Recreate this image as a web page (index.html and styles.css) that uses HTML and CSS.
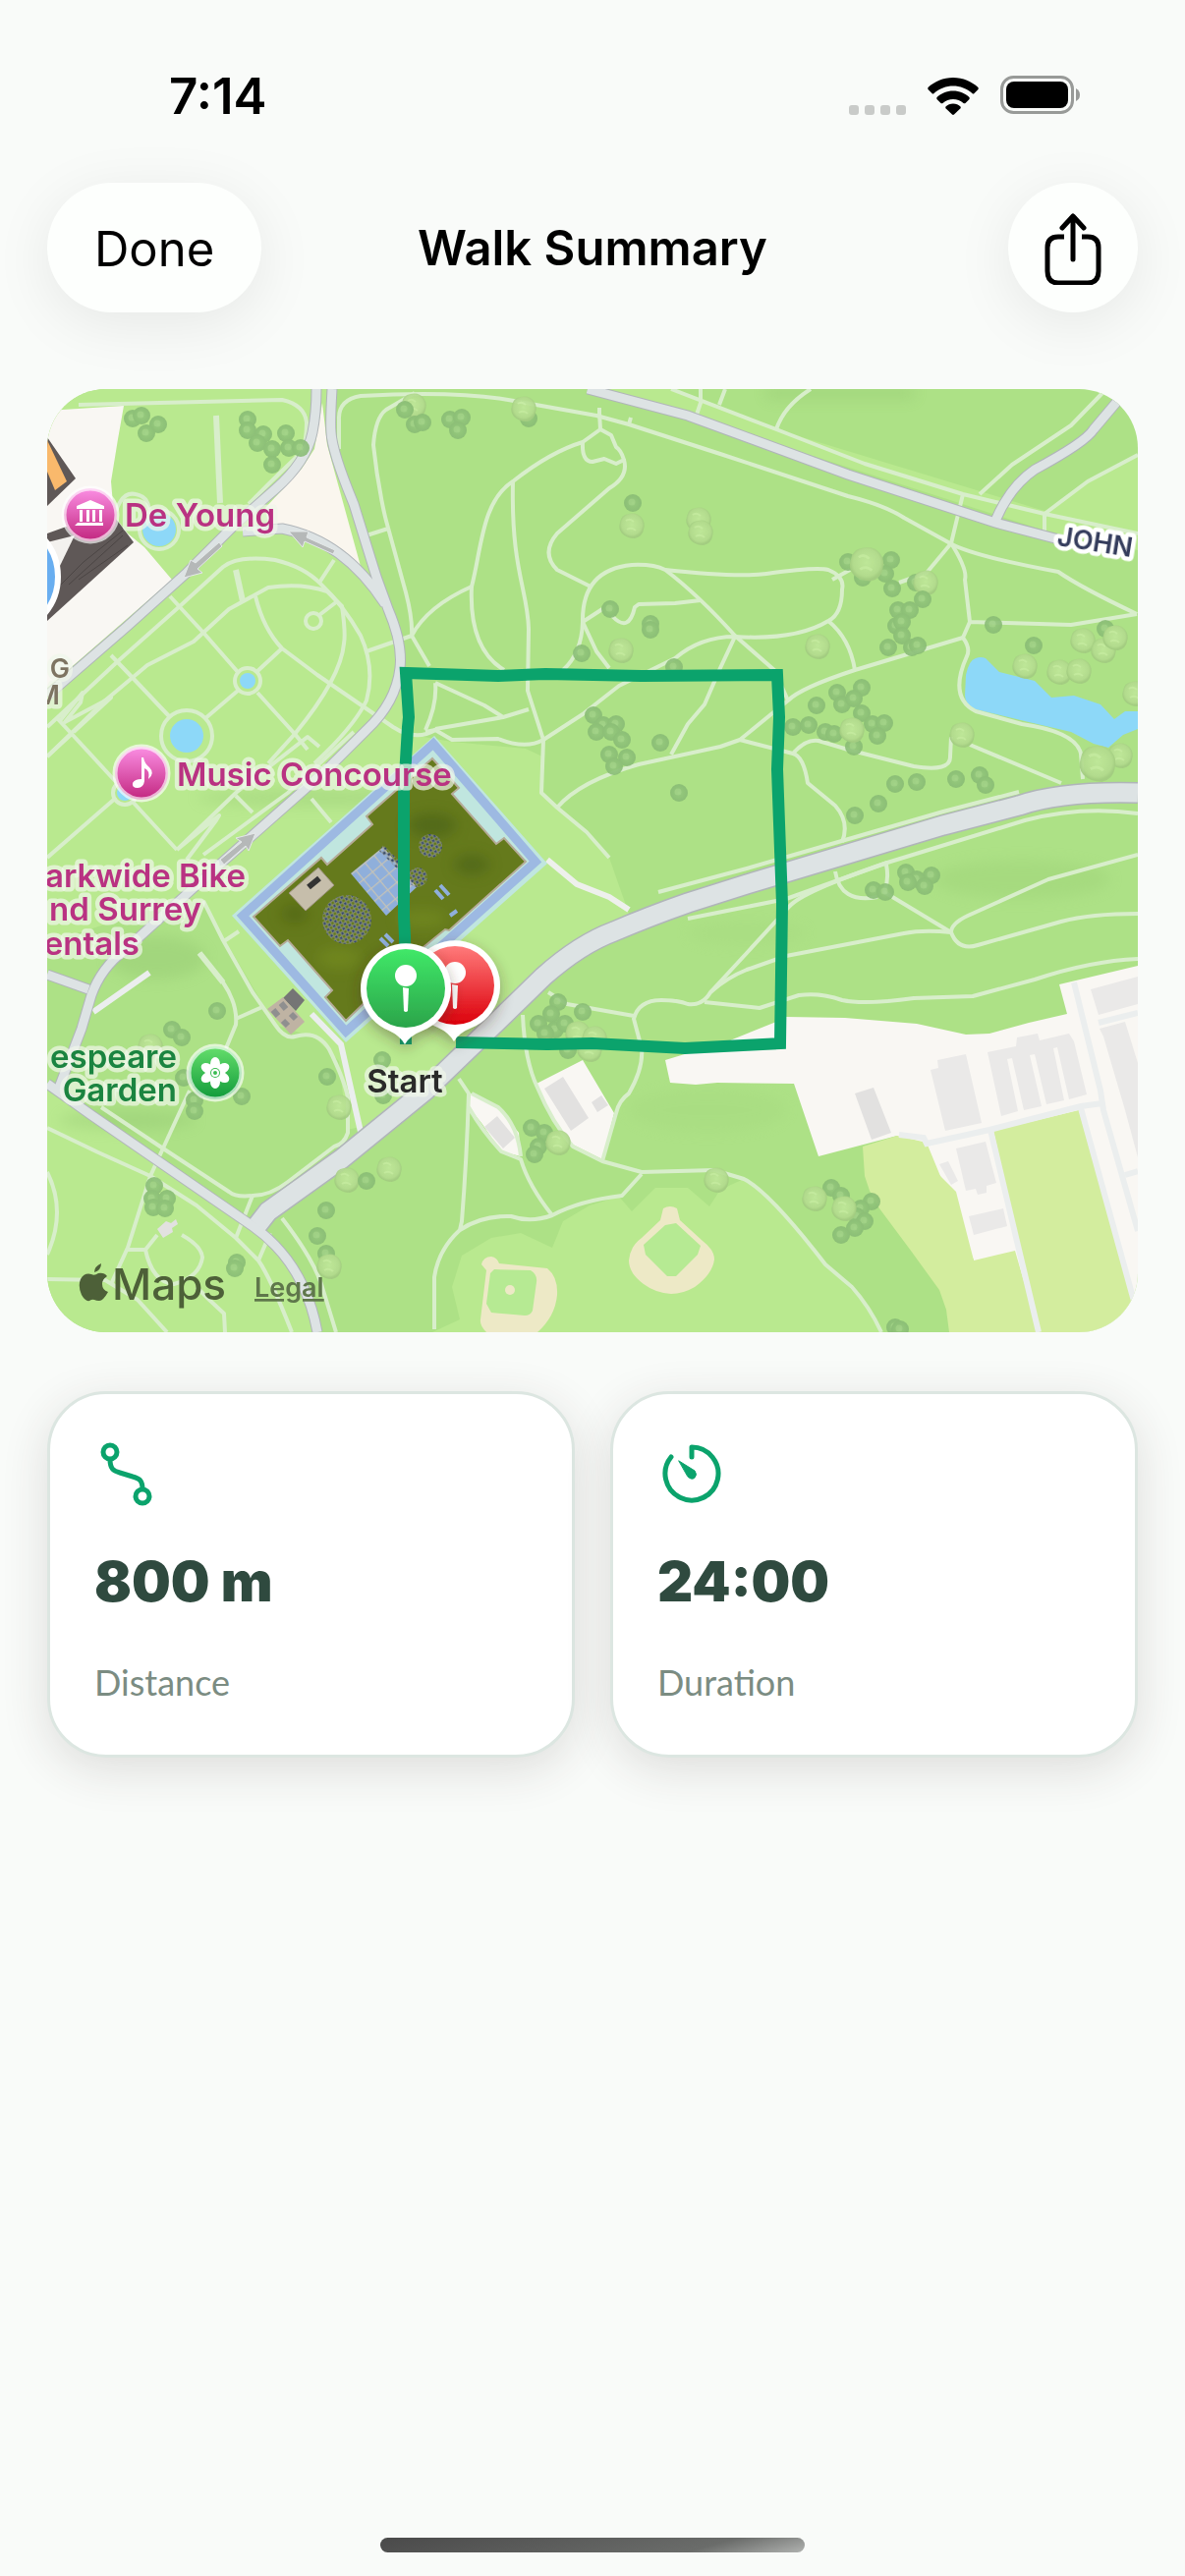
FILE: index.html
```
<!DOCTYPE html>
<html lang="en">
<head>
  <meta charset="UTF-8" />
  <meta name="viewport" content="width=device-width, initial-scale=1.0"/>
  <title>Walk Summary</title>
  <link rel="stylesheet" href="styles.css">
</head>
<body>
  <div class="statusbar">
    <div class="time">7:14</div>
    <div class="status-icons">
      <svg width="58" height="10" viewBox="0 0 58 10" fill="#c9cbc9"><rect width="10" height="10" rx="3"/><rect x="16" width="10" height="10" rx="3"/><rect x="32" width="10" height="10" rx="3"/><rect x="48" width="10" height="10" rx="3"/></svg>
      <svg width="52" height="38" viewBox="0 0 52 38"><path d="M26 0C36 0 45 4 51.500 10Q52 11 51.500 12L47.500 16Q46.500 17 45.500 16C40 11 33 8.500 26 8.500S12 11 6.500 16Q5.500 17 4.500 16L.5 12Q0 11 .5 10C7 4 16 0 26 0Z"/><path d="M26 13.500C32.500 13.500 38 16 42.500 20Q43 21 42.500 22L38.500 26Q37.500 26.500 36.500 26C33.500 23.300 30 22 26 22S18.500 23.300 15.500 26Q14.500 26.500 13.500 26L9.500 22Q9 21 9.500 20C14 16 19.500 13.500 26 13.500Z"/><path d="M26 26.500C29 26.500 31.500 27.500 33.500 29.500Q34 30.500 33.500 31.300L27 37.500Q26 38.400 25 37.500L18.500 31.300Q18 30.500 18.500 29.500C20.500 27.500 23 26.500 26 26.500Z"/></svg>
      <svg width="82" height="40" viewBox="0 0 82 40"><rect x="1.500" y="1.500" width="72" height="36" rx="12" fill="none" stroke="#989a98" stroke-width="3"/><rect x="6" y="6" width="63" height="27" rx="8"/><path d="M77 13Q81 15 81 19.500T77 26Z" fill="#989a98"/></svg>
    </div>
  </div>

  <header class="navbar">
    <button class="pill" type="button">Done</button>
    <h1>Walk Summary</h1>
    <button class="pill round" type="button" aria-label="Share">
      <svg width="60" height="76" viewBox="0 0 60 76" fill="none" stroke="#000" stroke-width="5" stroke-linecap="round" stroke-linejoin="round"><path d="M30 50V7M19 18L30 6L41 18"/><path d="M21 27H15Q4 27 4 38V62Q4 74 15 74H45Q56 74 56 62V38Q56 27 45 27H39" stroke-linecap="butt"/></svg>
    </button>
  </header>

  <main class="container">
    <div class="map">
      <svg viewBox="48 396 1110 960" role="img" aria-label="Map of the walk">
        <defs>
          <linearGradient id="pink" x2="0" y2="1"><stop offset="0" stop-color="#fb8fe4"/><stop offset="1" stop-color="#c2267f"/></linearGradient>
          <linearGradient id="leaf" x2="0" y2="1"><stop offset="0" stop-color="#66df6c"/><stop offset="1" stop-color="#109a3a"/></linearGradient>
          <linearGradient id="go" x2="0" y2="1"><stop offset="0" stop-color="#40e868"/><stop offset="1" stop-color="#2ba44a"/></linearGradient>
          <linearGradient id="stop" x2="0" y2="1"><stop offset="0" stop-color="#ff7a7a"/><stop offset="1" stop-color="#dc000b"/></linearGradient>
          <radialGradient id="dark-tree"><stop offset="0" stop-color="#9ccf83"/><stop offset=".3" stop-color="#90c47a"/><stop offset="1" stop-color="#88bb74"/></radialGradient>
          <radialGradient id="light-tree" cx=".5" cy=".45"><stop offset="0" stop-color="#c0e89a"/><stop offset=".8" stop-color="#b3db8e"/><stop offset="1" stop-color="#a2cb80"/></radialGradient>
          <pattern id="glass" width="12" height="12" patternUnits="userSpaceOnUse" patternTransform="translate(390 862) rotate(50)"><rect width="12" height="12" fill="#8fafdb"/><path d="M0 0H12M0 0V12" stroke="#c4c2b8" stroke-width="2.500"/></pattern>
          <pattern id="dots" width="5" height="5" patternUnits="userSpaceOnUse" patternTransform="rotate(15)"><circle cx="2.500" cy="2.500" r="1.800" fill="#2d4268" stroke="#9a9d92" stroke-width="1"/></pattern>
          <filter id="blur"><feGaussianBlur stdDeviation="7"/></filter>
          <filter id="shade" x="-50%" y="-50%" width="200%" height="200%"><feDropShadow dx="0" dy="5" stdDeviation="7" flood-color="#432" flood-opacity=".4"/></filter>
          <g id="t"><circle r="9" fill="url(#dark-tree)"/><circle cx="-1" cy="-1" r="3.500" fill="#a6d58c" opacity=".6"/></g>
          <g id="l"><path d="M-12 -3Q-11 -11 -3 -12Q5 -14 10 -8Q14 -3 12 4Q11 11 3 13Q-5 13 -10 8Q-14 3 -12 -3Z" fill="url(#light-tree)"/><path d="M-6 -5Q-2 -8 2 -4M-5 4Q0 1 4 5" stroke="#cdf0a8" stroke-width="2" fill="none" opacity=".6"/></g>
        </defs>

        <!-- ground -->
        <rect x="48" y="396" width="1110" height="960" fill="#ade186"/>
        <g fill="#b9e98f">
          <path d="M48 396H336V440L400 620L408 680L420 748L460 755L535 762L552 770L552 806L620 873L640 930L513 1020L400 1140L353 1150L345 1080L320 1056L280 1043L207 920L180 917L48 960Z"/>
          <path d="M48 1110L150 1178L255 1248L305 1300L320 1356H48Z"/>
          <path d="M598 396L700 423L1063 540L1158 560V540L1063 520L790 437L683 396Z"/>
          <path d="M667 1209H700L722 1228L733 1211L757 1200L783 1220L840 1287L887 1333L897 1356H440L468 1343L460 1310L470 1278L500 1260L530 1255L562 1270L573 1243L600 1227L630 1218L643 1233Z"/>
          <path d="M1063 523L1107 490L1158 463V543Z"/>
        </g>
        <g filter="url(#blur)" opacity=".25">
          <ellipse cx="1040" cy="895" rx="90" ry="20" fill="#92c76c"/><ellipse cx="720" cy="1130" rx="80" ry="22" fill="#a0d479"/><ellipse cx="160" cy="975" rx="50" ry="22" fill="#82b763"/><ellipse cx="130" cy="1140" rx="70" ry="10" fill="#82b763"/><ellipse cx="760" cy="950" rx="60" ry="12" fill="#a0d479"/><rect x="780" y="394" width="150" height="12" fill="#82b763"/><ellipse cx="330" cy="812" rx="130" ry="9" fill="#82b763"/>
        </g>

        <!-- plots and water -->
        <path d="M48 418L126 413L120 447L113 490L116 525L130 543L147 557L175 590L60 690L48 700Z" fill="#f9f7f3"/>
        <path d="M328 410L333 453L368 580L340 560L307 543L273 533L270 517L307 477L320 457Z" fill="#faf6ee"/>
        <path d="M677 1079L743 1059L790 1040L800 1035L860 1036L933 1042L983 1053L1007 1052L1047 1041L1086 1032L1078 1002L1158 983V1356H1057L991 1283L957 1197L913 1156L833 1177L808 1103L730 1102L708 1104L682 1102Z" fill="#f9f7f3"/>
        <path d="M878 1167L913 1156L943 1163L957 1197L973 1213L991 1283L1033 1273L1057 1356H966L963 1333L956 1313L927 1273L895 1230L885 1212L880 1197ZM1011 1151L1098 1130L1158 1345V1356H1057Z" fill="#d3ed9e"/>
        <path d="M544 1104L593 1079L625 1133L613 1180L583 1165L565 1143ZM477 1127L479 1113L507 1127L528 1153L530 1177L510 1172L490 1143Z" fill="#f9f7f3"/>
        <path d="M993 670Q998 668 1003 670L1017 684L1053 693L1070 710L1093 708L1120 717L1134 732L1145 724H1158V742L1143 748L1128 761L1113 757L1090 745L1047 735L993 722Q982 717 982 708L983 687Q986 672 993 670Z" fill="#8dd8f8"/>
        <g fill="#8dd8f8"><circle cx="190" cy="749" r="17"/><circle cx="252" cy="693" r="8"/><circle cx="162" cy="539" r="17"/><circle cx="127" cy="807" r="8"/></g>

        <!-- ball fields -->
        <g fill="#ede9c6">
          <path d="M675 1230Q682 1226 689 1230L692 1242L715 1263Q727 1272 727 1282Q725 1297 707 1310Q695 1317 683 1317Q667 1316 655 1307Q640 1296 640 1283Q641 1269 653 1260L672 1242Z"/>
          <path d="M490 1287Q492 1279 500 1279Q506 1280 508 1286L557 1291Q568 1300 567 1318Q565 1340 547 1356H495Q488 1349 489 1343L495 1293Z"/>
        </g>
        <g fill="#b6ea93"><path d="M677 1247L688 1245L713 1268L710 1277L688 1299H679L657 1277L655 1267Z"/><path d="M503 1292L540 1293Q547 1297 546 1305L542 1334Q540 1339 534 1339L500 1336L495 1327L499 1296Z"/></g>
        <circle cx="519" cy="1313" r="5" fill="#ede9c6"/>

        <!-- buildings -->
        <g fill="#eae9e8">
          <path d="M1110 1007L1158 994V1022L1118 1033ZM1119 1047L1145 1040L1158 1082V1178L1145 1130L1123 1055Z"/>
          <path d="M1005 1071L1034 1065L1035 1056L1056 1052L1058 1059L1088 1052L1093 1060L1106 1114L1088 1119L1076 1066L1072 1067L1083 1120L1065 1124L1053 1073L1048 1074L1060 1126L1042 1130L1030 1077L1025 1078L1036 1131L1019 1136Z"/>
          <path d="M947 1089L955 1087L954 1079L983 1073L999 1143L962 1151ZM973 1169L1003 1162L1014 1204L1004 1207V1214L995 1216L993 1210L983 1212ZM956 1185L965 1182L975 1202L968 1206ZM986 1238L1021 1230L1025 1248L991 1257Z"/>
        </g>
        <g fill="#e2e1e0"><path d="M870 1113L889 1107L907 1153L887 1160ZM554 1108L573 1096L599 1138L581 1151ZM602 1122L612 1115L619 1125L608 1132ZM493 1147L506 1136L524 1158L512 1169ZM160 1251L169 1243L174 1245L179 1241L181 1246L175 1250L176 1254L166 1260Z"/></g>
        <g fill="none" stroke="#ebeeee" stroke-width="6">
          <path d="M915 1155L940 1158L943 1164L1007 1150L1100 1126L1122 1123M1093 1000L1120 1110L1123 1130L1158 1253M1008 1150L1057 1356M1100 1128L1155 1328M1118 1041L1158 1031M1145 1196L1158 1192"/>
          <path d="M317 1032L347 1063L367 1152M95 1030L152 990"/>
        </g>

        <!-- footpaths -->
        <g class="paths">
          <path d="M80 412L287 407Q310 412 312 430Q312 450 307 460L273 493L253 513"/>
          <path d="M220 423L224 512M240 580L247 612M203 970L227 1000" stroke-width="6"/>
          <path d="M345 457V427Q344 407 367 403C400 401 470 398 523 408L607 423L640 432L733 462L863 505Q900 514 920 527L967 553Q990 566 1077 582Q1100 598 1157 625"/>
          <path d="M422 400L393 417Q382 425 380 453C385 500 393 530 393 530L413 603Q420 630 419 647L437 678M373 545L395 538M373 663L419 647Q435 617 480 597"/>
          <path d="M48 740L120 673L183 617L227 577Q243 565 280 570Q310 577 327 595Q350 617 367 647Q382 680 373 713Q360 740 320 777"/>
          <path d="M48 770L107 713L150 677L197 653L233 620L273 598Q307 593 333 602L348 617Q352 645 350 655Q347 690 300 747L273 777"/>
          <path d="M260 607Q268 640 287 660L323 687L400 740Q423 755 443 743M173 607L208 645L242 684M262 705L300 747L313 763M287 660L260 685M242 703L208 732M113 667L137 692L173 730M57 730L73 747L120 798M134 815L180 865M48 770L73 747M325 593L340 570M325 626L342 613"/>
          <circle cx="252" cy="693" r="13"/><circle cx="190" cy="749" r="26"/><circle cx="319" cy="632" r="8"/><circle cx="127" cy="807" r="12"/><circle cx="162" cy="539" r="20"/><path d="M118 520Q125 500 138 503Q150 505 152 518"/>
          <path d="M48 873L118 812M180 865L240 807L313 750L325 760M207 870L293 807L360 745M190 875L220 835L223 830L180 865M317 813L337 837M240 810L257 827M60 735L84 705L82 715L66 735L113 710L75 745"/>
          <path d="M207 917L227 957L257 1010L280 1043Q290 1058 300 1055Q323 1048 335 1068Q350 1098 354 1117V1153Q350 1165 340 1167L293 1203Q275 1217 257 1217Q240 1219 233 1213L163 1167L103 1127M228 958L243 948"/>
          <path d="M203 970L227 1000Q242 1022 240 1043L230 1067M240 1037L267 1025M193 1110L153 1197L130 1270L113 1307M48 1148L100 1173L153 1197L200 1227L240 1260L263 1283Q275 1300 297 1356"/>
          <path d="M48 1302L107 1303L140 1323L170 1356M130 1272H148L160 1257M148 1272Q155 1305 177 1307Q203 1300 206 1280Q205 1268 185 1257M200 1310L213 1323L228 1337L229 1356M48 1193Q68 1233 48 1277M257 1217L240 1260M275 1255L263 1283M287 1240Q318 1280 327 1307L342 1356"/>
          <path d="M467 1098L477 1113Q475 1180 470 1243L468 1252M442 1353V1300Q446 1272 468 1252Q490 1237 520 1238Q540 1245 562 1237Q590 1222 633 1217L653 1195M477 1127Q490 1150 510 1172L530 1180Q538 1207 562 1237M480 1113L507 1127Q527 1145 530 1177"/>
          <path d="M532 1033Q534 1080 547 1107Q562 1143 583 1167L613 1182L653 1193L727 1191L757 1200Q783 1213 840 1287L867 1310Q885 1330 897 1356M613 1182L627 1133Q630 1120 640 1113Q655 1087 653 1067Q645 1037 645 1037Q650 1018 673 1018Q690 1018 700 1022Q715 1024 723 1010L760 970L803 923Q815 908 903 878M558 1010L577 1022L645 1034"/>
          <path d="M717 1020L773 1026L813 1013Q835 1010 857 1018Q880 1023 930 1016L990 1014L1053 997Q1110 978 1158 976M723 1010Q740 995 760 987L800 973L920 950Q940 946 968 949Q968 940 985 932L1067 895L1158 870M968 949Q975 968 995 962L1080 938Q1110 930 1158 930"/>
          <path d="M700 935L760 923L800 915L903 878L1043 835Q1100 820 1158 828M850 887Q855 920 893 913M902 880Q905 895 900 908L968 949M670 908L760 884L860 855L960 826L1037 806"/>
          <path d="M610 420L611 437L593 450Q560 460 522 490C490 510 490 560 480 597Q477 660 513 682M522 490C520 580 537 600 538 640L537 703L553 753L551 807L567 822L597 847L620 873M567 822Q590 795 650 778L733 760L753 753L802 713Q815 700 870 682L980 649"/>
          <path d="M593 450Q592 470 603 470L615 467L627 472L635 468Q632 458 627 455L622 443L611 437M635 468Q640 485 620 497L567 543Q550 563 567 580L603 598M573 682Q592 665 593 633Q592 580 643 575Q665 574 677 580Q710 605 748 647L788 682L802 713"/>
          <path d="M677 580Q750 588 780 584Q830 577 843 580Q860 587 857 600Q857 625 843 632Q810 652 748 648Q713 648 687 670L630 698L593 727L553 753Q535 763 507 752L460 753L443 743L433 745M593 633L607 663L620 680M593 633L613 620M623 627Q640 645 646 618L650 615L687 614L713 611M748 648L733 680L717 717L700 737L683 768"/>
          <path d="M443 695L493 718L512 730L443 742M512 730L538 722M443 695Q445 717 433 743M753 753L807 767Q818 770 822 797L850 820Q865 837 857 857M807 767Q820 752 833 754L863 763L930 780Q968 786 967 770L968 750M987 758L1080 797"/>
          <path d="M683 396L790 437L880 472L980 503L1063 523L1158 543M790 437Q798 413 825 396M713 396V410L708 425M732 412L738 396M980 503L968 553L943 583L915 593M968 553Q985 580 982 590L987 633L980 649Q988 660 984 668Q965 710 993 724L1040 737Q1095 745 1100 767L1102 793M997 503L1030 473L1090 433L1122 400M1063 523V540M1063 523L1107 490L1158 463M987 633L1090 636L1157 625M843 632Q865 650 870 682M847 590L865 580M610 415V424M642 425L640 432"/>
          <path d="M557 875L587 900L620 913L640 926" stroke-width="6" stroke="#eef0ec"/>
        </g>

        <!-- roads, casing first -->
        <g class="roads casing">
          <path class="wide" d="M262 1247L273 1233L347 1180L433 1110L513 1033L553 994Q590 961 625 948Q660 933 700 919L760 900L960 840L1037 820Q1080 805 1158 807"/>
          <path d="M322 396Q322 420 318 440Q312 470 280 498L240 533L190 583L130 637L48 708"/>
          <path d="M338 396Q336 430 337 440Q338 460 360 513L383 587L395 620Q410 655 407 680Q403 715 373 743L333 783L220 883L127 967Q103 985 93 1013L83 1047L60 1107M247 541L287 538Q350 550 392 615M48 992L90 1007"/>
          <path d="M48 1103L93 1135L257 1248Q310 1285 323 1356M598 396L700 423L863 483L1013 532L1085 551M1140 405L1113 437Q1105 450 1053 478Q1028 495 1013 530"/>
        </g>
        <g class="roads">
          <path class="wide" d="M262 1247L273 1233L347 1180L433 1110L513 1033L553 994Q590 961 625 948Q660 933 700 919L760 900L960 840L1037 820Q1080 805 1158 807"/>
          <path d="M322 396Q322 420 318 440Q312 470 280 498L240 533L190 583L130 637L48 708"/>
          <path d="M338 396Q336 430 337 440Q338 460 360 513L383 587L395 620Q410 655 407 680Q403 715 373 743L333 783L220 883L127 967Q103 985 93 1013L83 1047L60 1107M247 541L287 538Q350 550 392 615M48 992L90 1007"/>
          <path d="M48 1103L93 1135L257 1248Q310 1285 323 1356M598 396L700 423L863 483L1013 532L1085 551M1140 405L1113 437Q1105 450 1053 478Q1028 495 1013 530"/>
        </g>
        <g fill="#b5b8b8" stroke="#e4e8e8" stroke-width="1"><path d="M341 560L312 547L314 541L294 541L308 557L310 551L339 564Z"/><path d="M223 552L199 573L194 570L187 588L206 583L201 579L226 556Z"/><path d="M224 875L246 857L240 853L260 848L253 866L250 861L228 880Z"/></g>

        <!-- museum roof -->
        <path d="M48 445L77 487L48 515ZM48 543L112 520L136 552L48 632Z" fill="#5f5857"/>
        <path d="M48 448L68 490L56 499L48 480Z" fill="#f9b96c"/>
        <path d="M48 552L76 545L60 578L48 572Z" fill="#f3f1ee"/>
        <path d="M70 595L125 545M62 595L85 572L125 540M80 590L130 555" stroke="#4b4544" stroke-width="1" fill="none"/>
        <circle cx="1" cy="587" r="58" fill="#69aef0" stroke="#fff" stroke-width="6"/>

        <!-- academy of sciences -->
        <path d="M442 749L557 879L352 1061L236 932Z" fill="#c0e6df"/>
        <path d="M441 757L545 877L352 1050L247 932Z" fill="none" stroke="#9db9e2" stroke-width="9"/>
        <path d="M440 772L467 802L460 808L505 859L513 853L535 877L457 947L453 946L420 973L352 1039L331 1015L338 1008L293 957L285 963L258 933L327 873L333 880L379 839L373 831Z" fill="#657a1c" stroke="#b5ab98" stroke-width="2"/>
        <g filter="url(#blur)" opacity=".5"><ellipse cx="440" cy="840" rx="25" ry="12" fill="#3f5a12"/><ellipse cx="480" cy="880" rx="18" ry="10" fill="#3f5a12"/><ellipse cx="345" cy="975" rx="22" ry="10" fill="#7c9420"/><ellipse cx="300" cy="930" rx="14" ry="10" fill="#465c10"/><ellipse cx="430" cy="935" rx="25" ry="8" fill="#7c9420"/></g>
        <path d="M390 862L424 903L393 932L357 889Z" fill="url(#glass)"/>
        <circle cx="353" cy="936" r="25" fill="url(#dots)"/><circle cx="438" cy="861" r="12" fill="url(#dots)"/><circle cx="425" cy="893" r="10" fill="url(#dots)"/><path d="M390 860L412 882L408 888L386 866Z" fill="url(#dots)"/>
        <path d="M324 883L340 901L311 927L294 909Z" fill="#c6beab" stroke="#9d947f" stroke-width="1"/><path d="M314 903L325 894" stroke="#333" stroke-width="6"/>
        <path d="M443 906L451 915M448 901L457 911M387 955L395 963M392 951L400 959M458 932L465 927" stroke="#8fafdb" stroke-width="4"/>
        <path d="M298 1006L310 1018L301 1029L288 1016Z" fill="#757575"/>
        <path d="M288 1015L310 1040L296 1053L272 1027Z" fill="#bfb3a3"/><path d="M278 1028L283 1034M286 1021L291 1027M288 1039L293 1044M296 1032L301 1037" stroke="#8f8f8f" stroke-width="6"/>

        <!-- trees -->
        <g opacity=".9">
          <use href="#t" x="135" y="426"/><use href="#t" x="144" y="423"/><use href="#t" x="161" y="432"/><use href="#t" x="149" y="441"/><use href="#t" x="252" y="427"/><use href="#t" x="252" y="438"/><use href="#t" x="268" y="442"/><use href="#t" x="262" y="451"/><use href="#t" x="291" y="441"/><use href="#t" x="294" y="456"/><use href="#t" x="306" y="456"/><use href="#t" x="277" y="457"/><use href="#t" x="277" y="473"/>
          <use href="#l" x="421" y="413"/><use href="#t" x="412" y="417"/><use href="#t" x="422" y="432"/><use href="#t" x="430" y="430"/><use href="#t" x="458" y="427"/><use href="#t" x="470" y="425"/><use href="#t" x="466" y="438"/><use href="#t" x="538" y="426"/><use href="#l" x="533" y="416"/>
          <use href="#t" x="644" y="512"/><use href="#l" x="643" y="535"/><use href="#l" x="711" y="529"/><use href="#l" x="713" y="542"/><use href="#t" x="621" y="620"/><use href="#t" x="662" y="635"/><use href="#t" x="662" y="641"/><use href="#l" x="632" y="662"/><use href="#t" x="592" y="665"/><use href="#t" x="686" y="679"/>
          <use href="#t" x="604" y="728"/><use href="#t" x="614" y="738"/><use href="#t" x="627" y="737"/><use href="#t" x="607" y="745"/><use href="#t" x="622" y="745"/><use href="#t" x="633" y="753"/><use href="#t" x="672" y="756"/><use href="#t" x="620" y="768"/><use href="#t" x="638" y="771"/><use href="#t" x="625" y="780"/><use href="#t" x="691" y="807"/>
          <use href="#t" x="863" y="572"/><use href="#t" x="907" y="570"/><use href="#t" x="901" y="584"/><use href="#t" x="878" y="588"/><use href="#t" x="908" y="599"/><use href="#l" transform="translate(882 574) scale(1.350)"/><use href="#t" x="932" y="593"/><use href="#l" x="942" y="593"/><use href="#t" x="939" y="610"/><use href="#t" x="914" y="621"/><use href="#t" x="926" y="621"/><use href="#t" x="912" y="637"/><use href="#t" x="918" y="633"/><use href="#t" x="918" y="647"/><use href="#t" x="904" y="659"/><use href="#t" x="928" y="659"/><use href="#t" x="934" y="657"/><use href="#l" x="832" y="658"/>
          <use href="#t" x="1011" y="636"/><use href="#t" x="1052" y="657"/><use href="#l" x="1043" y="678"/><use href="#l" x="1078" y="684"/><use href="#l" x="1098" y="683"/><use href="#l" x="1102" y="652"/><use href="#t" x="1125" y="640"/><use href="#l" x="1123" y="662"/><use href="#l" x="1135" y="649"/><use href="#l" x="1155" y="706"/>
          <use href="#t" x="852" y="705"/><use href="#t" x="877" y="700"/><use href="#t" x="857" y="717"/><use href="#t" x="869" y="711"/><use href="#t" x="831" y="718"/><use href="#t" x="877" y="726"/><use href="#t" x="807" y="740"/><use href="#t" x="823" y="738"/><use href="#t" x="840" y="745"/><use href="#t" x="849" y="747"/><use href="#t" x="888" y="737"/><use href="#t" x="900" y="736"/><use href="#t" x="893" y="749"/><use href="#t" x="869" y="760"/><use href="#l" x="867" y="743"/><use href="#l" x="979" y="748"/>
          <use href="#l" x="1140" y="769"/><use href="#l" transform="translate(1117 777) scale(1.450)"/>
          <use href="#t" x="911" y="798"/><use href="#t" x="933" y="796"/><use href="#t" x="973" y="793"/><use href="#t" x="997" y="789"/><use href="#t" x="1003" y="799"/><use href="#t" x="894" y="818"/><use href="#t" x="870" y="830"/><use href="#t" x="922" y="888"/><use href="#t" x="948" y="891"/><use href="#t" x="933" y="895"/><use href="#t" x="924" y="898"/><use href="#t" x="941" y="902"/><use href="#t" x="889" y="906"/><use href="#t" x="901" y="908"/>
          <use href="#t" x="221" y="1029"/><use href="#l" x="153" y="1065"/><use href="#t" x="175" y="1048"/><use href="#t" x="185" y="1056"/><use href="#t" x="187" y="1097"/><use href="#t" x="246" y="1116"/><use href="#t" x="198" y="1120"/><use href="#t" x="198" y="1131"/><use href="#t" x="333" y="1096"/><use href="#t" x="389" y="1079"/><use href="#t" x="390" y="1115"/><use href="#l" x="345" y="1127"/>
          <use href="#t" x="157" y="1207"/><use href="#t" x="155" y="1220"/><use href="#t" x="170" y="1220"/><use href="#t" x="156" y="1229"/><use href="#t" x="168" y="1230"/><use href="#t" x="241" y="1285"/><use href="#t" x="239" y="1291"/><use href="#l" x="353" y="1201"/><use href="#t" x="373" y="1202"/><use href="#l" x="396" y="1190"/><use href="#t" x="332" y="1232"/><use href="#t" x="323" y="1258"/><use href="#t" x="332" y="1276"/><use href="#l" x="335" y="1289"/>
          <use href="#t" x="568" y="1020"/><use href="#t" x="561" y="1032"/><use href="#t" x="593" y="1030"/><use href="#t" x="548" y="1042"/><use href="#t" x="565" y="1048"/><use href="#t" x="575" y="1042"/><use href="#t" x="555" y="1052"/><use href="#t" x="578" y="1069"/><use href="#l" x="588" y="1052"/><use href="#l" x="605" y="1057"/><use href="#l" x="600" y="1068"/><use href="#t" x="541" y="1148"/><use href="#t" x="554" y="1153"/><use href="#t" x="548" y="1167"/><use href="#t" x="544" y="1175"/><use href="#l" x="568" y="1163"/><use href="#l" x="729" y="1201"/>
          <use href="#t" x="846" y="1209"/><use href="#t" x="856" y="1217"/><use href="#t" x="887" y="1223"/><use href="#t" x="876" y="1230"/><use href="#t" x="872" y="1238"/><use href="#t" x="880" y="1243"/><use href="#t" x="870" y="1250"/><use href="#t" x="856" y="1257"/><use href="#l" x="829" y="1220"/><use href="#l" x="859" y="1230"/><use href="#t" x="911" y="1351"/><use href="#t" x="916" y="1353"/>
        </g>

        <!-- walked route -->
        <path d="M413 1063L412 953L411 933V807L415 740L416 730L413 685L507 688L555 686L653 688L791 687L793 730L791 783L796 920L794 1062L697 1067L603 1062L557 1063L464 1061" fill="none" stroke="#0ba36c" stroke-width="12"/>

        <!-- place markers -->
        <g stroke="#fff" stroke-opacity=".65" stroke-width="5"><circle cx="92" cy="524" r="27" fill="url(#pink)"/><circle cx="144" cy="787" r="27" fill="url(#pink)"/><circle cx="219" cy="1092" r="27" fill="url(#leaf)"/></g>
        <path d="M92 509L106 515V518H78V515ZM79 532H105V535H76ZM81 519H84V531H81ZM88 519H91V531H88ZM94 519H97V531H94ZM101 519H104V531H101Z" fill="#fff"/>
        <path d="M144 771H146Q147 777 152 781Q158 787 151 793Q153 784 147 782V795Q146 802 140 802Q134 802 135 797Q137 793 144 793Z" fill="#fff"/>
        <g fill="#fff" transform="translate(219 1092)"><g id="petals"><ellipse cy="-9" rx="5" ry="7"/><ellipse cy="9" rx="5" ry="7"/></g><use href="#petals" transform="rotate(60)"/><use href="#petals" transform="rotate(120)"/><circle r="5" fill="#3bbb52"/><circle r="3" fill="none" stroke="#fff" stroke-width="2"/></g>

        <!-- start and end pins -->
        <g filter="url(#shade)"><path d="M462 1060Q457 1051 446 1046A46 46 0 1 1 480 1046Q467 1051 462 1060Z" fill="#fff"/><circle cx="463" cy="1003" r="40" fill="url(#stop)"/><circle cx="463" cy="990" r="11" fill="#fff"/><path d="M460 1002L466 1003L465 1026Q463 1028 461 1026Z" fill="#fff"/></g>
        <g filter="url(#shade)"><path d="M412 1063Q407 1054 396 1049A46 46 0 1 1 430 1049Q417 1054 412 1063Z" fill="#fff"/><circle cx="413" cy="1006" r="40" fill="url(#go)"/><circle cx="413" cy="993" r="11" fill="#fff"/><path d="M410 1005L416 1006L415 1029Q413 1031 411 1029Z" fill="#fff"/></g>

        <!-- labels -->
        <g class="labels">
          <g class="pink"><text x="127" y="536">De Young</text><text x="180" y="800">Music Concourse</text>
            <g text-anchor="end"><text x="250" y="903">arkwide Bike</text><text x="205" y="937">nd Surrey</text><text x="142" y="972">entals</text></g></g>
          <g class="green" text-anchor="end"><text x="180" y="1087">espeare</text><text x="180" y="1121">Garden</text></g>
          <g class="gray" text-anchor="end"><text x="71" y="690">G</text><text x="61" y="717">M</text></g>
          <text class="street" transform="translate(1075 555) rotate(9)">JOHN</text>
          <text class="start" x="412" y="1112" text-anchor="middle">Start</text>
        </g>
        <g class="brand">
          <path d="M96 1295Q96 1289 103 1286Q103 1293 96 1295ZM109 1299Q104 1302 104 1307Q104 1313 110 1315Q105 1324 101 1324Q98 1324 96 1323Q94 1322 91 1324Q87 1325 83 1318Q79 1309 82 1302Q86 1295 93 1297Q96 1299 100 1296Q106 1295 109 1299Z"/>
          <text x="114" y="1323">Maps</text>
        </g>
        <a href="#legal"><text class="legal" x="259" y="1320">Legal</text></a>
      </svg>
    </div>

    <section class="cards">
      <div class="card">
        <svg width="72" height="68" viewBox="0 0 72 68" fill="none" stroke="#0ba36c" stroke-width="5"><circle cx="16" cy="12" r="7"/><circle cx="49" cy="57" r="7"/><path d="M16 19C16 29 19 31 26 33L39 37C47 39 49 42 49 50"/></svg>
        <div class="value">800 m</div>
        <div class="label">Distance</div>
      </div>
      <div class="card">
        <svg width="72" height="68" viewBox="0 0 72 68" fill="none" stroke="#0ba36c" stroke-width="5" stroke-linecap="round" stroke-linejoin="round"><path d="M35 17V7A27 27 0 1 1 14 17"/><path d="M22 21L38 31Q41 35 38 38T31 37Z" fill="#0ba36c" stroke-width="1"/></svg>
        <div class="value">24:00</div>
        <div class="label">Duration</div>
      </div>
    </section>
  </main>

  <div class="home-indicator"></div>
</body>
</html>
```
FILE: styles.css
```
* {
  box-sizing: border-box;
}
body {
  font-family: Inter, "Liberation Sans", sans-serif;
  margin: 0;
  min-height: 100vh;
  display: flex;
  flex-direction: column;
  background-color: #f9fbf9;
  color: #000;
}
.statusbar {
  display: flex;
  justify-content: space-between;
  padding: 68px 106px 0 172px;
  height: 186px;
}
.time {
  font-size: 51px;
  font-weight: 600;
  line-height: 60px;
}
.status-icons {
  display: flex;
  align-items: flex-end;
  gap: 22px;
  height: 49px;
}
.navbar {
  display: grid;
  grid-template-columns: 1fr auto 1fr;
  align-items: center;
  padding: 0 48px;
}
.navbar h1 {
  margin: 0;
  padding-top: 2px;
  font-size: 49px;
  font-weight: 600;
  line-height: 60px;
}
.pill {
  justify-self: start;
  height: 132px;
  padding: 2px 48px 0;
  border: none;
  border-radius: 66px;
  background: #fdfffd;
  box-shadow: 0 12px 60px rgba(0,0,0,0.08);
  font-family: inherit;
  font-size: 49px;
  color: #000;
  cursor: pointer;
}
.round {
  justify-self: end;
  width: 132px;
  padding: 0;
  display: flex;
  align-items: center;
  justify-content: center;
}
.container {
  display: flex;
  flex-direction: column;
  gap: 60px;
  padding: 78px 48px 0;
}
.map {
  border-radius: 60px;
  overflow: hidden;
}
.map svg {
  display: block;
  width: 100%;
}
.paths {
  fill: none;
  stroke: #d8eecb;
  stroke-width: 4;
  stroke-linejoin: round;
}
.roads {
  fill: none;
  stroke: #dde3e4;
  stroke-width: 9;
}
.roads .wide {
  stroke-width: 19;
}
.casing {
  stroke: #b0b5b9;
  stroke-width: 11;
}
.casing .wide {
  stroke-width: 22;
}
.labels {
  font-size: 33px;
  font-weight: 600;
  paint-order: stroke;
  stroke: rgba(240,246,234,0.7);
  stroke-width: 9;
  stroke-linejoin: round;
}
.pink {
  fill: #b93282;
}
.green {
  fill: #1b8440;
}
.gray {
  fill: #7d7462;
  font-size: 27px;
}
.street {
  fill: #343c5c;
  font-size: 27px;
  stroke: #fff;
}
.start {
  fill: #2a2a2a;
}
.brand {
  fill: #4d6038;
  font-size: 44px;
  font-weight: 500;
}
.legal {
  fill: #5f774b;
  font-size: 27px;
  font-weight: 600;
  text-decoration: underline;
}
.cards {
  display: flex;
  gap: 36px;
}
.card {
  flex: 1;
  padding: 47px 45px;
  background: #fff;
  border: 3px solid #dce6e1;
  border-radius: 60px;
  box-shadow: 0 12px 48px rgba(60,40,40,0.14);
}
.card svg {
  display: block;
}
.value {
  margin-top: 36px;
  font-size: 56px;
  font-weight: 900;
  line-height: 80px;
  color: #2f4a3f;
}
.label {
  margin-top: 35px;
  font-family: Lato, sans-serif;
  font-size: 36px;
  line-height: 54px;
  color: #7b8c82;
}
.home-indicator {
  width: 432px;
  height: 15px;
  margin: auto auto 24px;
  border-radius: 8px;
  background: linear-gradient(165deg, #4a4a4a, #6a6c6a 75%, #b0b2b0);
}
```
